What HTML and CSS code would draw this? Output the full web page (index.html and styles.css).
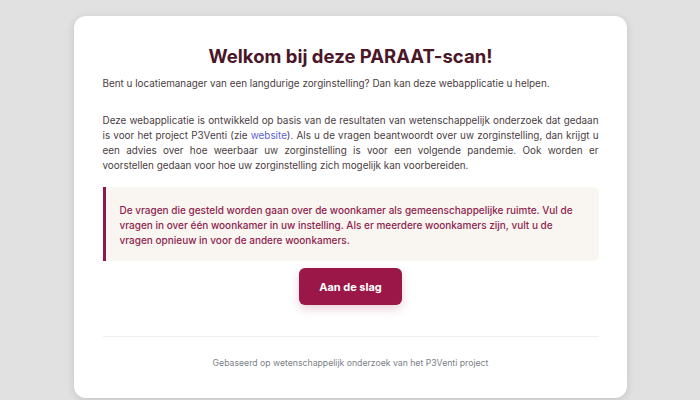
FILE: index.html
```html
<!DOCTYPE html>
<html lang="nl">
<head>
<meta charset="utf-8">
<title>PARAAT-scan</title>
<link rel="stylesheet" href="styles.css">
</head>
<body>
<main class="card">
  <h1 class="title">Welkom bij deze PARAAT-scan!</h1>
  <p class="text">Bent u locatiemanager van een langdurige zorginstelling? Dan kan deze webapplicatie u helpen.</p>
  <p class="text justify">Deze webapplicatie is ontwikkeld op basis van de resultaten van wetenschappelijk onderzoek dat gedaan is voor het project P3Venti (zie <a class="link" href="#">website</a>). Als u de vragen beantwoordt over uw zorginstelling, dan krijgt u een advies over hoe weerbaar uw zorginstelling is voor een volgende pandemie. Ook worden er voorstellen gedaan voor hoe uw zorginstelling zich mogelijk kan voorbereiden.</p>
  <div class="callout">De vragen die gesteld worden gaan over de woonkamer als gemeenschappelijke ruimte. Vul de vragen in over één woonkamer in uw instelling. Als er meerdere woonkamers zijn, vult u de vragen opnieuw in voor de andere woonkamers.</div>
  <div class="actions"><button class="btn" type="button">Aan de slag</button></div>
  <hr class="divider">
  <p class="footer">Gebaseerd op wetenschappelijk onderzoek van het P3Venti project</p>
</main>
</body>
</html>
```

FILE: styles.css
```css
html, body {
  margin: 0;
  padding: 0;
  background: #e1e1e1;
}
body {
  font-family: Inter, "Noto Sans", sans-serif;
  padding-top: 16px;
  height: 400px;
  box-sizing: border-box;
  overflow: hidden;
}
.card {
  width: 553px;
  margin: 0 auto;
  box-sizing: border-box;
  background: #ffffff;
  border-radius: 12px;
  box-shadow: 0 2px 8px rgba(0, 0, 0, 0.13);
  padding: 29px 28px 28px 29px;
}
.title {
  margin: 0 0 9px;
  text-align: center;
  font-size: 18.5px;
  line-height: 22px;
  font-weight: 700;
  color: #4a1628;
}
.text {
  margin: 0 0 22px;
  font-size: 9.9px;
  line-height: 15px;
  color: #4a3d42;
}
.justify {
  text-align: justify;
  margin-bottom: 14px;
}
.link {
  color: #5a5fd0;
  text-decoration: none;
}
.callout {
  background: #f9f5f1;
  border-left: 3px solid #8c1a4b;
  border-radius: 0 6px 6px 0;
  padding: 16px 16px 13px 14px;
  font-size: 10px;
  line-height: 15px;
  font-weight: 500;
  color: #8e1f4f;
}
.actions {
  display: flex;
  justify-content: center;
  margin-top: 7px;
}
.btn {
  width: 103px;
  height: 37px;
  border: none;
  border-radius: 6px;
  background: #9a1748;
  color: #ffffff;
  font-family: Inter, "Noto Sans", sans-serif;
  font-size: 11px;
  font-weight: 700;
  box-shadow: 0 4px 10px rgba(154, 23, 72, 0.2);
}
.divider {
  margin: 31px 0 0;
  border: none;
  border-top: 1px solid #f0eeee;
}
.footer {
  margin: 19px 0 0;
  text-align: center;
  font-size: 8.7px;
  line-height: 14px;
  color: #7b7f88;
}
```
